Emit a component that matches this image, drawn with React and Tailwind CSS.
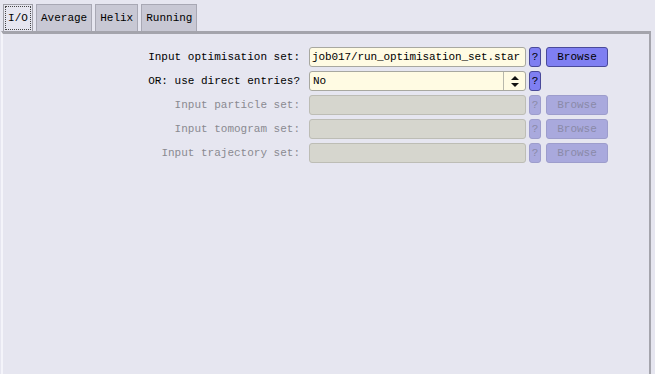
import React from "react";

const font = { fontFamily: '"Liberation Mono", "DejaVu Sans Mono", monospace' };

function Row({ label, value, disabled, dropdown, browse = true }) {
  return (
    <div className="flex items-center h-[20px]">
      <div
        className={`w-[300px] text-right text-[11px] leading-none whitespace-nowrap ${disabled ? "text-[#8a8a90]" : "text-black"}`}
      >
        {label}
      </div>
      {dropdown ? (
        <div className="ml-[9px] w-[217px] h-[20px] flex rounded-[3px] border border-[#a8a8a0] bg-[#fffbe3]">
          <div className="flex-1 pl-[3px] flex items-center text-[11px] leading-none text-black">{value}</div>
          <div className="w-[22px] border-l border-[#b8b8ac] flex items-center justify-center">
            <svg width="8" height="11" viewBox="0 0 8 11">
              <polygon points="4,0 8,4 0,4" fill="#111" />
              <polygon points="0,7 8,7 4,11" fill="#111" />
            </svg>
          </div>
        </div>
      ) : (
        <div
          className={`ml-[9px] w-[217px] h-[20px] rounded-[3px] border flex items-center pl-[2px] text-[11px] leading-none overflow-hidden whitespace-nowrap tracking-[-0.1px] ${
            disabled ? "bg-[#d6d6ce] border-[#bdbdb5]" : "bg-[#fffbe3] border-[#a8a8a0] text-black"
          }`}
        >
          {value}
        </div>
      )}
      <div
        className={`ml-[3px] w-[12px] h-[20px] rounded-[3px] border flex items-center justify-center text-[11px] leading-none ${
          disabled ? "bg-[#a9a9dd] border-[#9d9dcc] text-[#8a8aa8]" : "bg-[#7f7ff2] border-[#4a4a9a] text-black"
        }`}
      >
        ?
      </div>
      {browse && (
        <div
          className={`ml-[5px] w-[62px] h-[20px] rounded-[3px] border flex items-center justify-center text-[11px] leading-none ${
            disabled ? "bg-[#a9a9dd] border-[#9d9dcc] text-[#8a8aa8]" : "bg-[#7f7ff2] border-[#4a4a9a] text-black"
          }`}
        >
          Browse
        </div>
      )}
    </div>
  );
}

export default function App() {
  return (
    <div className="w-[655px] h-[374px] bg-[#e6e6f0] overflow-hidden flex flex-col" style={font}>
      <div className="flex items-end pl-[3px] pt-[3px] h-[31px] gap-[3px]">
        <div className="h-[27px] w-[30px] bg-[#e6e6f0] border-l border-t border-r border-[#a0a0a8] flex items-center justify-center p-[1px]">
          <div className="w-full h-full border border-dotted border-[#444] flex items-center justify-center text-[11px] leading-none text-black">
            I/O
          </div>
        </div>
        <div className="h-[27px] px-[4px] bg-[#c8c8d4] border-l border-t border-r border-[#a8a8b4] flex items-center text-[11px] leading-none text-black">
          Average
        </div>
        <div className="h-[27px] px-[4px] bg-[#c8c8d4] border-l border-t border-r border-[#a8a8b4] flex items-center text-[11px] leading-none text-black">
          Helix
        </div>
        <div className="h-[27px] px-[4px] bg-[#c8c8d4] border-l border-t border-r border-[#a8a8b4] flex items-center text-[11px] leading-none text-black">
          Running
        </div>
      </div>
      <div className="flex-1 ml-[1px] mr-[4px] border-t-[3px] border-t-[#a4a4ac] border-r-2 border-r-[#a4a4ac] border-l-2 border-l-[#f4f4fa] bg-[#e6e6f0]">
        <div className="-ml-[3px] pt-[13px] flex flex-col gap-[4px]">
          <Row label="Input optimisation set:" value="job017/run_optimisation_set.star" />
          <Row label="OR: use direct entries?" value="No" dropdown browse={false} />
          <Row label="Input particle set:" disabled />
          <Row label="Input tomogram set:" disabled />
          <Row label="Input trajectory set:" disabled />
        </div>
      </div>
    </div>
  );
}
